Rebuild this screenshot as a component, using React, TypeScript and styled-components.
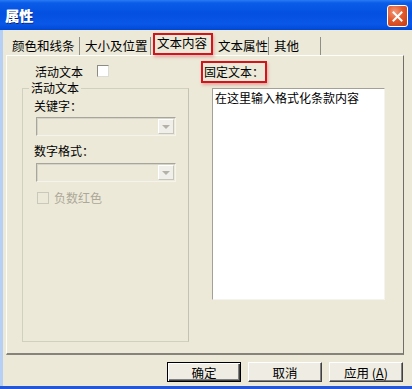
import React from "react";
import styled, { createGlobalStyle } from "styled-components";

const GlobalStyle = createGlobalStyle`
    html, body {
        margin: 0;
        padding: 0;
        background: #ece9d8;
    }
    body {
        font-family: "Noto Sans CJK SC", "Noto Sans", sans-serif;
        font-size: 12px;
        color: #000;
    }
`;

const Window = styled.div`
    width: 412px;
    height: 389px;
    box-sizing: border-box;
    display: flex;
    flex-direction: column;
    background: #ece9d8;
    border-bottom: 3px solid #2456d8;
    overflow: hidden;
`;

const TitleBar = styled.div`
    height: 30px;
    flex: none;
    display: flex;
    align-items: center;
    justify-content: space-between;
    padding: 0 4px 0 5px;
    background: linear-gradient(
        to bottom,
        #2a7bf4 0%,
        #0a5ce8 10%,
        #0450e0 45%,
        #0a58e8 80%,
        #0048d4 100%
    );
`;

const Title = styled.span`
    color: #fff;
    font-weight: bold;
    font-size: 14px;
    text-shadow: 0.6px 0 0 #fff, 1px 1px 0 #0a1e6a;
`;

const CloseButton = styled.div`
    width: 21px;
    height: 22px;
    margin-top: 2px;
    box-sizing: border-box;
    border: 1px solid #fff;
    border-radius: 3px;
    background: radial-gradient(circle at 35% 30%, #f29a7c 0%, #e25a2c 45%, #c43a12 100%);
    display: flex;
    align-items: center;
    justify-content: center;
`;

const Body = styled.div`
    flex: 1;
    display: flex;
    flex-direction: column;
    border-left: 3px solid #b6cff4;
    padding-top: 3px;
`;

const TabStrip = styled.div`
    height: 22px;
    display: flex;
    align-items: flex-end;
    padding-left: 4px;
`;

const Tab = styled.div<{ $w: number; $active?: boolean }>`
    box-sizing: border-box;
    width: ${(p) => p.$w}px;
    height: ${(p) => (p.$active ? 22 : 18)}px;
    line-height: ${(p) => (p.$active ? 16 : 17)}px;
    padding-left: ${(p) => (p.$active ? 2 : 5)}px;
    margin-left: ${(p) => (p.$active ? 2 : 0)}px;
    font-size: 12.5px;
    white-space: nowrap;
    border-right: 1px solid #8f8f86;
    ${(p) =>
        p.$active &&
        `
        border: 2px solid #d4141c;
        box-shadow: 1px 2px 3px rgba(210, 90, 90, 0.45);
        position: relative;
        z-index: 1;
    `}
`;

const Panel = styled.div`
    box-sizing: border-box;
    width: 398px;
    height: 300px;
    margin-left: 3px;
    display: flex;
    border-top: 1px solid #fdfdfb;
    border-left: 1px solid #fdfdfb;
    border-right: 1px solid #716f64;
    border-bottom: 2px solid #85837a;
`;

const LeftCol = styled.div`
    width: 167px;
    margin-left: 15px;
    display: flex;
    flex-direction: column;
`;

const ActiveRow = styled.div`
    margin-top: 8px;
    padding-left: 13px;
    height: 14px;
    display: flex;
    align-items: center;
    gap: 14px;
`;

const CheckBox = styled.span<{ $disabled?: boolean }>`
    width: 12px;
    height: 12px;
    box-sizing: border-box;
    flex: none;
    background: ${(p) => (p.$disabled ? "#ece9d8" : "#fff")};
    border: 1px solid ${(p) => (p.$disabled ? "#cac8bb" : "#8c8c84")};
    ${(p) => !p.$disabled && "border-right-color: #dcdcd6; border-bottom-color: #dcdcd6;"}
`;

const GroupBox = styled.fieldset`
    box-sizing: border-box;
    margin: 3px 0 0 0;
    padding: 0 0 0 6px;
    height: 261px;
    border: 1px solid #d0d0bf;
    border-right-color: #c4c2b4;
    border-radius: 0;
    display: flex;
    flex-direction: column;
`;

const Legend = styled.legend`
    padding: 0 2px;
    line-height: 14px;
`;

const FieldLabel = styled.div<{ $top: number }>`
    margin-top: ${(p) => p.$top}px;
    margin-left: 5px;
    line-height: 14px;
`;

const Combo = styled.div<{ $top: number }>`
    box-sizing: border-box;
    margin-top: ${(p) => p.$top}px;
    margin-left: 7px;
    width: 140px;
    height: 19px;
    border: 1px solid #a8a69a;
    border-right-color: #f4f3ee;
    border-bottom-color: #f4f3ee;
    box-shadow: inset 1px 1px 0 #d6d4c8;
    background: #ece9d8;
    display: flex;
    justify-content: flex-end;
    align-items: center;
    padding-right: 1px;
`;

const DropButton = styled.div`
    box-sizing: border-box;
    width: 16px;
    height: 15px;
    background: #f0efe9;
    border: 1px solid #fff;
    border-right-color: #c7c5b9;
    border-bottom-color: #c7c5b9;
    display: flex;
    align-items: center;
    justify-content: center;
`;

const Arrow = styled.span`
    width: 0;
    height: 0;
    border-left: 4px solid transparent;
    border-right: 4px solid transparent;
    border-top: 4px solid #b4b2a8;
    margin-top: 1px;
`;

const DisabledRow = styled.div`
    margin-top: 9px;
    margin-left: 8px;
    display: flex;
    align-items: center;
    gap: 5px;
    color: #aca899;
    line-height: 14px;
`;

const RightCol = styled.div`
    margin-left: 12px;
    display: flex;
    flex-direction: column;
    align-items: flex-start;
`;

const MarkedLabel = styled.div`
    margin-top: 5px;
    height: 22px;
    box-sizing: border-box;
    padding: 0 1px;
    border: 2px solid #d4141c;
    box-shadow: 1px 2px 3px rgba(210, 90, 90, 0.45);
    line-height: 18px;
    white-space: nowrap;
`;

const TextBox = styled.div`
    box-sizing: border-box;
    margin-top: 5px;
    margin-left: 11px;
    width: 173px;
    height: 212px;
    background: #fff;
    border: 1px solid #a3a195;
    border-right-color: #f4f3ee;
    border-bottom-color: #f4f3ee;
    padding: 2px 2px;
    line-height: 14px;
`;

const ButtonRow = styled.div`
    margin-top: 7px;
    padding-right: 9px;
    display: flex;
    justify-content: flex-end;
    gap: 7px;
`;

const Button = styled.div<{ $default?: boolean }>`
    box-sizing: border-box;
    width: 74px;
    height: 20px;
    background: #efede3;
    display: flex;
    align-items: center;
    justify-content: center;
    font-size: 12.5px;
    white-space: pre;
    border: 1px solid;
    border-color: ${(p) => (p.$default ? "#000" : "#fff #404040 #404040 #fff")};
    box-shadow: ${(p) =>
        p.$default
            ? "inset 1px 1px 0 #fff, inset -1px -1px 0 #404040, inset -2px -2px 0 #808080"
            : "inset -1px -1px 0 #808080"};
`;

const Mnemonic = styled.span`
    text-decoration: underline;
`;

export default function App() {
    return (
        <>
            <GlobalStyle />
            <Window>
                <TitleBar>
                    <Title>属性</Title>
                    <CloseButton>
                        <svg width="11" height="11" viewBox="0 0 11 11">
                            <path d="M1.5 1.5 L9.5 9.5 M9.5 1.5 L1.5 9.5" stroke="#fff" strokeWidth="2" strokeLinecap="square" />
                        </svg>
                    </CloseButton>
                </TitleBar>
                <Body>
                    <TabStrip>
                        <Tab $w={73}>颜色和线条</Tab>
                        <Tab $w={71}>大小及位置</Tab>
                        <Tab $w={60} $active>文本内容</Tab>
                        <Tab $w={56}>文本属性</Tab>
                        <Tab $w={52}>其他</Tab>
                    </TabStrip>
                    <Panel>
                        <LeftCol>
                            <ActiveRow>
                                <span>活动文本</span>
                                <CheckBox />
                            </ActiveRow>
                            <GroupBox>
                                <Legend>活动文本</Legend>
                                <FieldLabel $top={4}>关键字：</FieldLabel>
                                <Combo $top={4}>
                                    <DropButton>
                                        <Arrow />
                                    </DropButton>
                                </Combo>
                                <FieldLabel $top={8}>数字格式：</FieldLabel>
                                <Combo $top={5}>
                                    <DropButton>
                                        <Arrow />
                                    </DropButton>
                                </Combo>
                                <DisabledRow>
                                    <CheckBox $disabled />
                                    <span>负数红色</span>
                                </DisabledRow>
                            </GroupBox>
                        </LeftCol>
                        <RightCol>
                            <MarkedLabel>固定文本：</MarkedLabel>
                            <TextBox>在这里输入格式化条款内容</TextBox>
                        </RightCol>
                    </Panel>
                    <ButtonRow>
                        <Button $default>确定</Button>
                        <Button>取消</Button>
                        <Button>
                            {"应用 ("}<Mnemonic>A</Mnemonic>)
                        </Button>
                    </ButtonRow>
                </Body>
            </Window>
        </>
    );
}
